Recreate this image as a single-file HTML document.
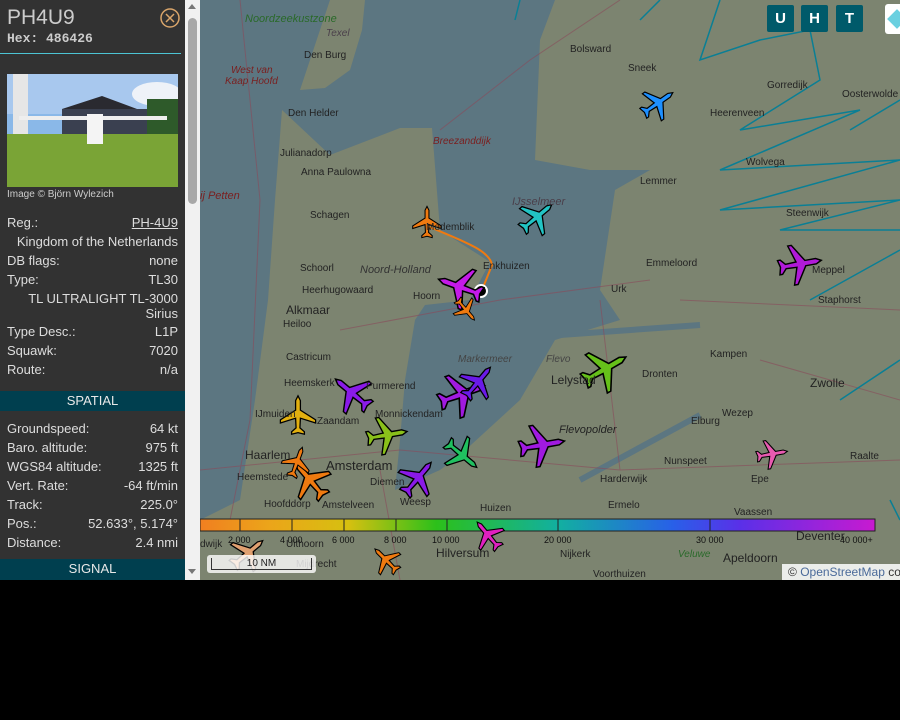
<!DOCTYPE html>
<html><head><meta charset="utf-8"><style>
*{margin:0;padding:0;box-sizing:border-box}
body{width:900px;height:720px;background:#000;overflow:hidden;font-family:"Liberation Sans",sans-serif;position:relative}
#side{position:absolute;left:0;top:0;width:185px;height:580px;background:#323232;color:#ddd;font-size:13px}
#sb{position:absolute;left:185px;top:0;width:15px;height:580px;background:#f1f1f1}
#sb .th{position:absolute;left:3px;top:18px;width:9px;height:186px;background:#a8a8a8;border-radius:5px}
.row{display:flex;justify-content:space-between;padding:0 7px;height:19px;line-height:19px}
.hdr{background:#003f4f;color:#e8e8e8;text-align:center;height:20px;line-height:20px;font-size:13px}
#map{position:absolute;left:200px;top:0;width:700px;height:580px;background:#5c7681;overflow:hidden}
.lbl{position:absolute;font-size:10px;color:#222;white-space:nowrap}
.it{font-style:italic;color:#4a3f4a}
.btn{position:absolute;top:5px;width:27px;height:27px;background:#005a6a;color:#fff;font-weight:bold;font-size:15px;text-align:center;line-height:27px;border-radius:2px}
</style></head><body>
<div id="side">
 <div style="position:absolute;left:7px;top:6px;font-size:21px;color:#ccc">PH4U9</div>
 <div style="position:absolute;left:7px;top:31px;font-family:'Liberation Mono',monospace;font-weight:bold;font-size:13px;color:#ccc">Hex: 486426</div>
 <svg style="position:absolute;left:159px;top:7px" width="22" height="22"><circle cx="11" cy="11" r="9" fill="none" stroke="#d9a56a" stroke-width="1.5"/><path d="M7 7L15 15M15 7L7 15" stroke="#d9a56a" stroke-width="1.5"/></svg>
 <div style="position:absolute;left:0;top:53px;width:181px;height:1px;background:#4cc4d4"></div>
 <svg style="position:absolute;left:7px;top:74px" width="171" height="113">
  <rect width="171" height="113" fill="#8ab8e8"/>
  <rect y="0" width="171" height="40" fill="#a8c8ee"/>
  <ellipse cx="150" cy="20" rx="25" ry="12" fill="#eef2f8"/>
  <rect x="6" y="0" width="15" height="60" fill="#e6e6e6"/>
  <rect x="55" y="35" width="116" height="30" fill="#3a4050"/>
  <polygon points="55,35 95,22 130,35" fill="#2a2a30"/>
  <rect x="140" y="25" width="31" height="40" fill="#2e5a2a"/>
  <rect y="60" width="171" height="53" fill="#7aa436"/>
  <rect x="12" y="42" width="148" height="4" fill="#eee"/>
  <rect x="80" y="40" width="16" height="30" fill="#f4f4f4"/>
 </svg>
 <div style="position:absolute;left:7px;top:189px;font-size:10px;color:#ccc">Image © Björn Wylezich</div>
 <div style="position:absolute;left:0;top:213px;width:185px">
  <div class="row"><span>Reg.:</span><span style="text-decoration:underline">PH-4U9</span></div>
  <div class="row" style="justify-content:flex-end"><span>Kingdom of the Netherlands</span></div>
  <div class="row"><span>DB flags:</span><span>none</span></div>
  <div class="row"><span>Type:</span><span>TL30</span></div>
  <div style="padding:0 7px;text-align:right;line-height:15px;height:34px;padding-top:2px">TL ULTRALIGHT TL-3000<br>Sirius</div>
  <div class="row" style="margin-top:-1px"><span>Type Desc.:</span><span>L1P</span></div>
  <div class="row"><span>Squawk:</span><span>7020</span></div>
  <div class="row"><span>Route:</span><span>n/a</span></div>
 </div>
 <div class="hdr" style="position:absolute;left:0;top:391px;width:185px">SPATIAL</div>
 <div style="position:absolute;left:0;top:419px;width:185px">
  <div class="row"><span>Groundspeed:</span><span>64 kt</span></div>
  <div class="row"><span>Baro. altitude:</span><span>975 ft</span></div>
  <div class="row"><span>WGS84 altitude:</span><span>1325 ft</span></div>
  <div class="row"><span>Vert. Rate:</span><span>-64 ft/min</span></div>
  <div class="row"><span>Track:</span><span>225.0°</span></div>
  <div class="row"><span>Pos.:</span><span>52.633°, 5.174°</span></div>
  <div class="row"><span>Distance:</span><span>2.4 nmi</span></div>
 </div>
 <div class="hdr" style="position:absolute;left:0;top:559px;width:185px;height:21px">SIGNAL</div>
</div>
<div id="sb"><div style="position:absolute;left:3px;top:4px;border:4px solid transparent;border-bottom:5px solid #777;border-top:0;width:0"></div><div class="th"></div><div style="position:absolute;left:3px;top:569px;border:4px solid transparent;border-top:5px solid #777;border-bottom:0;width:0"></div></div>
<div id="map">
<svg width="700" height="580" style="position:absolute;left:0;top:0">
 <defs><path id="pl" d="M0,-12 L1.5,-9 L1.5,-3 L11,3 L11,5 L1.5,2 L1.2,8 L4,10.5 L4,12 L0,11 L-4,12 L-4,10.5 L-1.2,8 L-1.5,2 L-11,5 L-11,3 L-1.5,-3 L-1.5,-9 Z" stroke="#000" stroke-width="0.8"/>
 <linearGradient id="g" x1="0" x2="1"><stop offset="0" stop-color="#f07f20"/><stop offset=".1" stop-color="#eca41a"/><stop offset=".22" stop-color="#d6c010"/><stop offset=".35" stop-color="#2cc01a"/><stop offset=".53" stop-color="#12b0a0"/><stop offset=".7" stop-color="#2860e8"/><stop offset=".8" stop-color="#5a30e8"/><stop offset="1" stop-color="#c81ad0"/></linearGradient></defs>
 <polygon points="0,520 40,500 55,400 68,300 75,200 82,110 130,155 200,128 232,128 240,230 290,262 270,300 225,305 215,320 205,380 200,440 195,490 240,470 260,455 320,400 355,340 420,320 400,290 415,190 450,170 390,170 335,160 340,40 355,0 700,0 700,580 0,580" fill="#7c8470"/>
 <polygon points="100,90 120,30 130,0 165,0 162,30 150,70 125,88" fill="#7c8470"/>
 <path d="M360,335 L500,325 M380,480 L500,415" stroke="#5c7681" stroke-width="6" fill="none"/>
 <g fill="none" stroke="#8a4a5a" stroke-width="1" opacity=".6">
  <path d="M40,0 L60,200 L50,420 L30,520 M140,330 L300,300 L450,280 M0,470 L200,450 L420,470 L700,460 M400,300 L420,470 M480,300 L700,310 M560,360 L700,400 M180,470 L200,580 M240,130 L330,60 L420,0"/>
 </g>
 <g fill="none" stroke="#0a7f95" stroke-width="1.5">
  <path d="M520,0 L500,60 L560,40 L610,30 L620,80 L540,130 L660,110 L520,170 L700,160 L520,210 L700,200 L580,230 L700,230"/>
  <path d="M650,130 L700,100 M610,300 L700,250 M640,400 L700,360 M690,500 L700,520"/>
  <path d="M460,0 L440,20 M320,0 L315,20"/>
 </g>
 <path d="M225,225 C260,240 290,250 292,265 L282,290" fill="none" stroke="#ef7a10" stroke-width="2"/>
 <circle cx="281" cy="291" r="6" fill="#000" stroke="#fff" stroke-width="2"/>
 <rect x="0" y="519" width="675" height="12" fill="url(#g)"/>
 <g stroke="#222" stroke-width="1"><path d="M40,519v12M92,519v12M144,519v12M196,519v12M247,519v12M358,519v12M510,519v12M675,519v12"/><rect x="0" y="519" width="675" height="12" fill="none"/></g>
 <g>
  <use href="#pl" fill="#1e90ff" transform="translate(458,103) rotate(55) scale(1.5)"/>
  <use href="#pl" fill="#22c4c4" transform="translate(337,217) rotate(50) scale(1.6)"/>
  <use href="#pl" fill="#ef7a10" transform="translate(227,222) rotate(0) scale(1.3)"/>
  <use href="#pl" fill="#c41ae8" transform="translate(260,287) rotate(-70) scale(1.9)"/>
  <use href="#pl" fill="#ef7a10" transform="translate(266,310) rotate(140) scale(1.1)"/>
  <use href="#pl" fill="#b01ad8" transform="translate(600,264) rotate(80) scale(1.8)"/>
  <use href="#pl" fill="#66c01a" transform="translate(405,369) rotate(60) scale(2)"/>
  <use href="#pl" fill="#8a1ae8" transform="translate(152,393) rotate(-50) scale(1.8)"/>
  <use href="#pl" fill="#a01ae0" transform="translate(262,394) rotate(70) scale(2)"/>
  <use href="#pl" fill="#6a1ae8" transform="translate(278,382) rotate(40) scale(1.6)"/>
  <use href="#pl" fill="#a01ae0" transform="translate(342,445) rotate(80) scale(1.9)"/>
  <use href="#pl" fill="#e2b010" transform="translate(98,415) rotate(0) scale(1.6)"/>
  <use href="#pl" fill="#8ac01a" transform="translate(187,435) rotate(80) scale(1.7)"/>
  <use href="#pl" fill="#20c060" transform="translate(262,455) rotate(130) scale(1.6)"/>
  <use href="#pl" fill="#8a1ae8" transform="translate(218,478) rotate(40) scale(1.7)"/>
  <use href="#pl" fill="#ef7a10" transform="translate(110,480) rotate(-40) scale(1.8)"/>
  <use href="#pl" fill="#ef7a10" transform="translate(97,462) rotate(20) scale(1.3)"/>
  <use href="#pl" fill="#e85ab0" transform="translate(572,454) rotate(80) scale(1.3)"/>
  <use href="#pl" fill="#e020c0" transform="translate(288,535) rotate(-40) scale(1.4)"/>
  <use href="#pl" fill="#ef7a10" transform="translate(186,560) rotate(-45) scale(1.3)"/>
  <use href="#pl" fill="#e0a070" transform="translate(48,553) rotate(50) scale(1.6)"/>
 </g>
</svg>
<div class="lbl it" style="left:45px;top:13px;color:#2a6a2a;font-size:11px">Noordzeekustzone</div>
<div class="lbl it" style="left:126px;top:28px">Texel</div>
<div class="lbl" style="left:104px;top:50px">Den Burg</div>
<div class="lbl it" style="left:31px;top:65px;color:#7a2020">West van</div>
<div class="lbl it" style="left:25px;top:76px;color:#7a2020">Kaap Hoofd</div>
<div class="lbl" style="left:88px;top:108px">Den Helder</div>
<div class="lbl" style="left:80px;top:148px">Julianadorp</div>
<div class="lbl" style="left:101px;top:167px">Anna Paulowna</div>
<div class="lbl it" style="left:233px;top:136px;color:#7a2020">Breezanddijk</div>
<div class="lbl" style="left:370px;top:44px">Bolsward</div>
<div class="lbl" style="left:428px;top:63px">Sneek</div>
<div class="lbl" style="left:567px;top:80px">Gorredijk</div>
<div class="lbl" style="left:642px;top:89px">Oosterwolde</div>
<div class="lbl" style="left:510px;top:108px">Heerenveen</div>
<div class="lbl" style="left:546px;top:157px">Wolvega</div>
<div class="lbl" style="left:440px;top:176px">Lemmer</div>
<div class="lbl it" style="left:0;top:190px;font-size:11px;color:#7a2020">ij Petten</div>
<div class="lbl" style="left:110px;top:210px">Schagen</div>
<div class="lbl" style="left:226px;top:222px">Medemblik</div>
<div class="lbl it" style="left:312px;top:196px;font-size:11px">IJsselmeer</div>
<div class="lbl" style="left:586px;top:208px">Steenwijk</div>
<div class="lbl" style="left:100px;top:263px">Schoorl</div>
<div class="lbl it" style="left:160px;top:264px;font-size:11px;color:#333">Noord-Holland</div>
<div class="lbl" style="left:283px;top:261px">Enkhuizen</div>
<div class="lbl" style="left:446px;top:258px">Emmeloord</div>
<div class="lbl" style="left:612px;top:265px">Meppel</div>
<div class="lbl" style="left:102px;top:285px">Heerhugowaard</div>
<div class="lbl" style="left:213px;top:291px">Hoorn</div>
<div class="lbl" style="left:411px;top:284px">Urk</div>
<div class="lbl" style="left:618px;top:295px">Staphorst</div>
<div class="lbl" style="left:86px;top:303px;font-size:12px">Alkmaar</div>
<div class="lbl" style="left:83px;top:319px">Heiloo</div>
<div class="lbl" style="left:86px;top:352px">Castricum</div>
<div class="lbl it" style="left:258px;top:354px;color:#444">Markermeer</div>
<div class="lbl it" style="left:346px;top:354px;color:#444">Flevo</div>
<div class="lbl" style="left:510px;top:349px">Kampen</div>
<div class="lbl" style="left:610px;top:376px;font-size:12px">Zwolle</div>
<div class="lbl" style="left:84px;top:378px">Heemskerk</div>
<div class="lbl" style="left:166px;top:381px">Purmerend</div>
<div class="lbl" style="left:351px;top:373px;font-size:12px">Lelystad</div>
<div class="lbl" style="left:442px;top:369px">Dronten</div>
<div class="lbl" style="left:55px;top:409px">IJmuiden</div>
<div class="lbl" style="left:175px;top:409px">Monnickendam</div>
<div class="lbl" style="left:522px;top:408px">Wezep</div>
<div class="lbl" style="left:117px;top:416px">Zaandam</div>
<div class="lbl it" style="left:359px;top:424px;font-size:11px;color:#222">Flevopolder</div>
<div class="lbl" style="left:491px;top:416px">Elburg</div>
<div class="lbl" style="left:45px;top:448px;font-size:12px">Haarlem</div>
<div class="lbl" style="left:126px;top:458px;font-size:13px">Amsterdam</div>
<div class="lbl" style="left:464px;top:456px">Nunspeet</div>
<div class="lbl" style="left:650px;top:451px">Raalte</div>
<div class="lbl" style="left:37px;top:472px">Heemstede</div>
<div class="lbl" style="left:170px;top:477px">Diemen</div>
<div class="lbl" style="left:400px;top:474px">Harderwijk</div>
<div class="lbl" style="left:551px;top:474px">Epe</div>
<div class="lbl" style="left:64px;top:499px">Hoofddorp</div>
<div class="lbl" style="left:122px;top:500px">Amstelveen</div>
<div class="lbl" style="left:200px;top:497px">Weesp</div>
<div class="lbl" style="left:280px;top:503px">Huizen</div>
<div class="lbl" style="left:408px;top:500px">Ermelo</div>
<div class="lbl" style="left:534px;top:507px">Vaassen</div>
<div class="lbl" style="left:0;top:539px">dwijk</div>
<div class="lbl" style="left:86px;top:539px">Uithoorn</div>
<div class="lbl" style="left:236px;top:546px;font-size:12px">Hilversum</div>
<div class="lbl" style="left:596px;top:529px;font-size:12px">Deventer</div>
<div class="lbl" style="left:360px;top:549px">Nijkerk</div>
<div class="lbl it" style="left:478px;top:549px;color:#2a6a2a">Veluwe</div>
<div class="lbl" style="left:523px;top:551px;font-size:12px">Apeldoorn</div>
<div class="lbl" style="left:96px;top:559px">Mijdrecht</div>
<div class="lbl" style="left:393px;top:569px">Voorthuizen</div>
<div class="lbl" style="left:28px;top:535px;font-size:9px;color:#111">2 000</div>
<div class="lbl" style="left:80px;top:535px;font-size:9px;color:#111">4 000</div>
<div class="lbl" style="left:132px;top:535px;font-size:9px;color:#111">6 000</div>
<div class="lbl" style="left:184px;top:535px;font-size:9px;color:#111">8 000</div>
<div class="lbl" style="left:232px;top:535px;font-size:9px;color:#111">10 000</div>
<div class="lbl" style="left:344px;top:535px;font-size:9px;color:#111">20 000</div>
<div class="lbl" style="left:496px;top:535px;font-size:9px;color:#111">30 000</div>
<div class="lbl" style="left:640px;top:535px;font-size:9px;color:#111">40 000+</div>
<div style="position:absolute;left:7px;top:555px;width:109px;height:18px;background:rgba(255,255,255,.8);border-radius:3px"></div>
<div style="position:absolute;left:11px;top:558px;width:101px;height:12px;border:1px solid #333;border-top:0;font-size:10px;text-align:center;line-height:12px;color:#222">10 NM</div>
<div style="position:absolute;left:582px;top:564px;width:118px;height:16px;background:rgba(255,255,255,.85);font-size:12px;color:#333;line-height:16px;padding-left:6px;white-space:nowrap">© <span style="color:#4a6a9a">OpenStreetMap</span> co</div>
<div class="btn" style="left:567px">U</div>
<div class="btn" style="left:601px">H</div>
<div class="btn" style="left:636px">T</div>
<div style="position:absolute;left:685px;top:4px;width:20px;height:30px;background:#fff;border-radius:3px"><div style="position:absolute;left:5px;top:8px;width:14px;height:14px;background:#6ad0e0;transform:rotate(45deg)"></div></div>
</div>
</body></html>
